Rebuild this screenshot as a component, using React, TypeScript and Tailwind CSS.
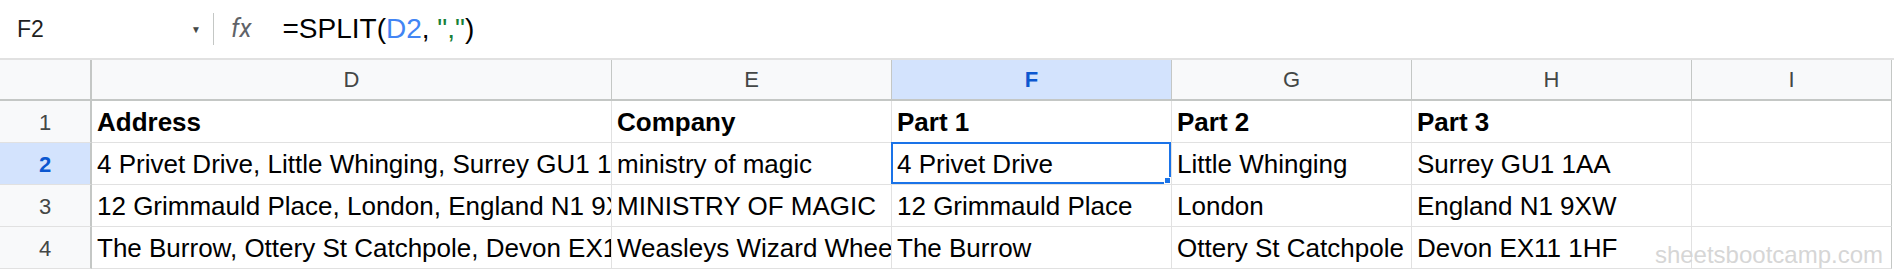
import React from 'react'

const cols = ['D', 'E', 'F', 'G', 'H', 'I']

const rows: string[][] = [
    ['Address', 'Company', 'Part 1', 'Part 2', 'Part 3', ''],
    ['4 Privet Drive, Little Whinging, Surrey GU1 1AA', 'ministry of magic', '4 Privet Drive', 'Little Whinging', 'Surrey GU1 1AA', ''],
    ['12 Grimmauld Place, London, England N1 9XW', 'MINISTRY OF MAGIC', '12 Grimmauld Place', 'London', 'England N1 9XW', ''],
    ['The Burrow, Ottery St Catchpole, Devon EX11 1HF', 'Weasleys Wizard Wheezes', 'The Burrow', 'Ottery St Catchpole', 'Devon EX11 1HF', ''],
]

export default function App() {
    return (
        <div className="relative w-[1894px] h-[278px] bg-white overflow-hidden" style={{ fontFamily: '"Liberation Sans", Arial, sans-serif' }}>
            {/* formula bar */}
            <div className="flex items-center h-[60px] border-b-2 border-[#e1e1e1]">
                <div className="flex items-center w-[205px] pl-[17px] pr-[4px]">
                    <span className="text-[23px] text-[#1f1f1f]">F2</span>
                    <span className="ml-auto text-[10px] text-[#444746]">▼</span>
                </div>
                <div className="w-px h-[32px] bg-[#c4c7c5] ml-[8px]" />
                <span className="ml-[17px] text-[25px] italic text-[#5f6368]" style={{ fontFamily: 'Roboto, sans-serif' }}>fx</span>
                <div className="ml-[31px] text-[28px] text-[#000]">
                    =SPLIT(<span className="text-[#4285f4]">D2</span>, <span className="text-[#188038]">","</span>)
                </div>
            </div>

            {/* grid */}
            <div className="grid grid-cols-[92px_520px_280px_280px_240px_280px_200px]">
                <div className="h-[41px] bg-[#f8f9fa] border-r-2 border-b-2 border-[#c4c7c5]" />
                {cols.map((c) => (
                    <div
                        key={c}
                        className={`h-[41px] flex items-center justify-center text-[22px] border-b-2 border-r border-[#c4c7c5] ${c === 'F' ? 'bg-[#d3e3fd] text-[#0b57d0] font-bold' : 'bg-[#f8f9fa] text-[#444746]'}`}
                    >
                        {c}
                    </div>
                ))}

                {rows.map((r, i) => (
                    <React.Fragment key={i}>
                        <div
                            className={`h-[42px] flex items-center justify-center pt-[2px] text-[22px] border-r-2 border-b border-r-[#c4c7c5] border-b-[#e1e1e1] ${i === 1 ? 'bg-[#d3e3fd] text-[#0b57d0] font-bold' : 'bg-[#f8f9fa] text-[#444746]'}`}
                        >
                            {i + 1}
                        </div>
                        {r.map((v, j) => (
                            <div
                                key={j}
                                className={`relative h-[42px] flex items-center pl-[5px] pt-[2px] border-b border-[#e1e1e1] text-[26px] text-black whitespace-nowrap ${j === 5 ? 'border-r border-r-[#c4c7c5]' : 'border-r'} ${i === 0 ? 'font-bold' : ''}`}
                            >
                                <span className="block overflow-hidden w-full">{v}</span>
                                {i === 1 && j === 2 && (
                                    <div className="absolute -top-[1px] -left-[1px] right-0 bottom-0 border-2 border-[#1a73e8]">
                                        <div className="absolute -right-[2px] -bottom-[2px] w-[7px] h-[7px] bg-[#1a73e8] border border-white" />
                                    </div>
                                )}
                            </div>
                        ))}
                    </React.Fragment>
                ))}
            </div>

            <div className="absolute right-[11px] bottom-[5px] text-[24px] text-[#d6d6d6] pointer-events-none">sheetsbootcamp.com</div>
        </div>
    )
}
